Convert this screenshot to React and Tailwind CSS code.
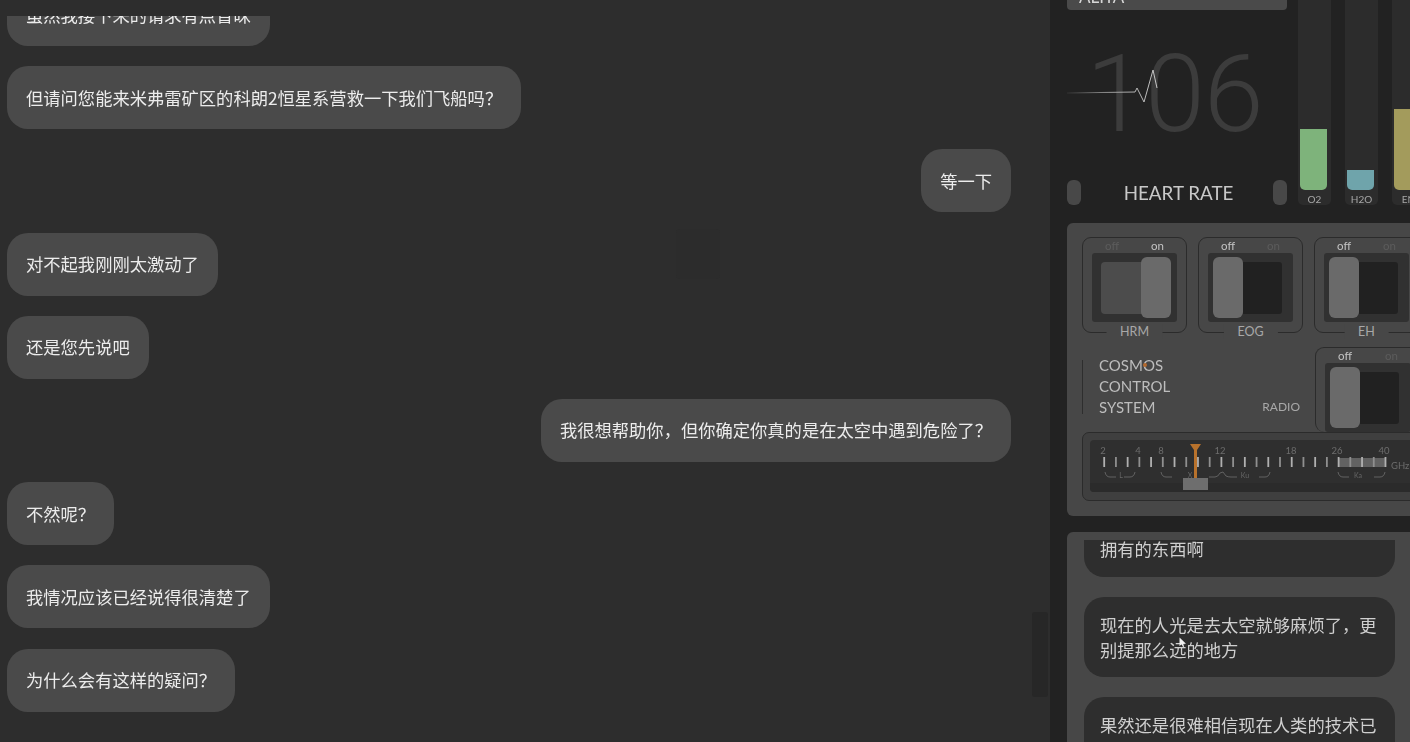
import React from "react";

const cjk = { fontFamily: '"Noto Sans CJK SC", "Noto Sans", sans-serif' };
const lato = { fontFamily: 'Lato, "Open Sans", sans-serif' };
const roboto = { fontFamily: 'Roboto, "Open Sans", sans-serif' };

const chats = [
  { t: "虽然我接下来的请求有点冒昧" },
  { t: "但请问您能来米弗雷矿区的科朗2恒星系营救一下我们飞船吗？" },
  { t: "等一下", me: true },
  { t: "对不起我刚刚太激动了" },
  { t: "还是您先说吧" },
  { t: "我很想帮助你，但你确定你真的是在太空中遇到危险了？", me: true },
  { t: "不然呢？" },
  { t: "我情况应该已经说得很清楚了" },
  { t: "为什么会有这样的疑问？" },
];

function Bubble({ t, me }) {
  return (
    <div className={me ? "flex justify-end pr-[39px]" : "flex justify-start pl-[7px]"}>
      <div className="h-[63px] shrink-0 flex items-center rounded-[21px] bg-[#4a4a4a] px-[19px] text-[17.3px] text-[#ececec] whitespace-nowrap">
        {t}
      </div>
    </div>
  );
}

function Switch({ label, on, radio }) {
  return (
    <div
      className={
        radio
          ? "relative h-[85px] w-[105px] shrink-0 rounded-l-[9px] border-l border-t border-[#2b2b2b]"
          : "relative h-[96px] w-[105px] shrink-0 rounded-[9px] border border-[#2b2b2b]"
      }
    >
      <div className="flex h-[15px] items-center justify-between px-[22px] text-[11.5px] leading-none" style={lato}>
        <span className={on ? "text-[#5c5c5c]" : "text-[#c4c4c4]"}>off</span>
        <span className={on ? "text-[#c4c4c4]" : "text-[#5c5c5c]"}>on</span>
      </div>
      <div className="mx-[9px] flex h-[69px] items-center rounded-[3px] bg-[#313131] px-[5px]">
        <div className="relative h-[52px] w-[76px] flex items-center">
          {on ? (
            <>
              <div className="ml-[4px] h-[52px] w-[62px] rounded-l-[4px] bg-[#4c4c4c]" />
              <div className="absolute right-[1px] top-[-5px] h-[61px] w-[30px] rounded-[6px] bg-[#6a6a6a]" />
            </>
          ) : (
            <>
              <div className="absolute left-0 top-[-5px] h-[61px] w-[30px] rounded-[6px] bg-[#6a6a6a]" />
              <div className="ml-[30px] h-[52px] w-[39px] rounded-r-[3px] bg-[#212121]" />
            </>
          )}
        </div>
      </div>
      {label && (
        <div
          className="absolute bottom-[-7px] left-1/2 -translate-x-1/2 bg-[#474747] px-[14px] text-[12.5px] leading-[15px] text-[#a8a8a8]"
          style={lato}
        >
          {label}
        </div>
      )}
    </div>
  );
}

function Bar({ label, h, color }) {
  return (
    <div className="flex h-[205px] w-[33px] shrink-0 flex-col justify-end rounded-b-[5px] bg-[#2c2c2c]">
      <div className="mx-[2px] mr-[4px] rounded-b-[5px]" style={{ height: h, background: color }} />
      <div className="mt-[3px] h-[12px] text-center text-[10px] leading-[12px] text-[#a6a6a6]" style={lato}>
        {label}
      </div>
    </div>
  );
}

function Tuner() {
  const ticks = Array.from({ length: 25 }, (_, i) => 13.3 + i * 11.72);
  const labels = [
    ["2", 13],
    ["4", 48],
    ["8", 71],
    ["12", 130],
    ["18", 201],
    ["26", 247],
    ["40", 294],
  ];
  const brackets = [
    "M15 32 q1 5 5 5 h6",
    "M34 37 h6 q4 0 5 -5",
    "M71 32 q1 5 5 5 h6",
    "M119 37 h6 q3 0 5 -4 l3 -1 l3 4 q2 1 5 1 h6",
    "M169 37 h6 q4 0 5 -5",
    "M248 32 q1 5 5 5 h6",
    "M284 37 h6 q4 0 5 -5",
  ];
  return (
    <div className="relative mt-0 h-[69px] w-[340px] shrink-0 rounded-[7px] border border-[#2b2b2b] bg-[#3f3f3f] p-[7px] pr-0">
      <div className="h-[52px] w-full overflow-hidden rounded-[4px] bg-[#2f2f2f]">
        <svg width="332" height="52" viewBox="0 0 332 52" style={lato}>
          <rect x="0" y="43" width="332" height="9" fill="#2b2b2b" />
          <rect x="248" y="18" width="47" height="9" fill="#626262" />
          {ticks.map((x, i) => (
            <rect key={i} x={x} y="17" width="1.8" height="10" fill={i % 2 ? "#8f8f8f" : "#b0b0b0"} />
          ))}
          {labels.map(([t, x]) => (
            <text key={t} x={x} y="14" fontSize="9.5" textAnchor="middle" fill="#6c6c6c">
              {t}
            </text>
          ))}
          <text x="301" y="29" fontSize="9.5" fill="#6c6c6c">GHz</text>
          {brackets.map((d, i) => (
            <path key={i} d={d} fill="none" stroke="#6e6e6e" strokeWidth="0.8" />
          ))}
          <text x="31" y="38" fontSize="7" textAnchor="middle" fill="#666">L</text>
          <text x="100" y="38" fontSize="7" textAnchor="middle" fill="#666">X</text>
          <text x="155" y="38" fontSize="7" textAnchor="middle" fill="#666">Ku</text>
          <text x="268" y="38" fontSize="7" textAnchor="middle" fill="#666">Ka</text>
          <rect x="93" y="38" width="25" height="12" fill="#6e6e6e" />
          <path d="M100 4 H111 L107 10 V38 H104 V10 Z" fill="#b8722c" />
        </svg>
      </div>
    </div>
  );
}

export default function App() {
  return (
    <div className="h-[742px] w-[1410px] overflow-hidden bg-[#2d2d2d]">
      <div className="flex h-[742px] w-[1410px] blur-[0.4px]" style={cjk}>
        {/* chat column */}
        <div className="relative h-full w-[1050px] shrink-0 pt-[16px]">
          <div className="h-[726px] overflow-hidden">
            <div className="mt-[-33px] flex flex-col gap-[20.2px]">
              {chats.map((c, i) => (
                <Bubble key={i} t={c.t} me={c.me} />
              ))}
            </div>
          </div>
          <div className="absolute left-[676px] top-[229px] h-[50px] w-[44px] rounded-[4px] bg-[#2c2c2c]" />
          <div className="absolute right-[2px] top-[612px] h-[85px] w-[16px] rounded-[3px] bg-[#272727]" />
        </div>

        {/* right column */}
        <div className="relative flex h-full w-[360px] shrink-0 flex-col overflow-hidden bg-[#222222]">
          <div className="flex h-[205px] shrink-0 pl-[17px]">
            <div className="flex w-[220px] shrink-0 flex-col" style={lato}>
              <div className="flex h-[10px] items-end overflow-hidden rounded-b-[4px] bg-[#4a4a4a] pb-[5px] pl-[12px] text-[17px] leading-none text-[#d8d8d8]">
                ALITA
              </div>
              <div className="relative flex h-[170px] items-start pl-[19px] pt-[30px]">
                <span className="text-[108px] font-light leading-[108px] tracking-[-1px] text-[#3c3c3c]" style={roboto}>
                  106
                </span>
                <svg className="absolute left-0 top-[55px]" width="96" height="50" viewBox="0 0 96 50">
                  <defs>
                    <linearGradient id="ecgfade" x1="0" x2="1" y1="0" y2="0">
                      <stop offset="0" stopColor="#b8b8b8" stopOpacity="0.1" />
                      <stop offset="0.5" stopColor="#b8b8b8" stopOpacity="0.8" />
                      <stop offset="1" stopColor="#c8c8c8" />
                    </linearGradient>
                  </defs>
                  <path d="M0 28 L68 27 L70 23 L77 37 L86 5 L90 23" fill="none" stroke="url(#ecgfade)" strokeWidth="1" />
                </svg>
              </div>
              <div className="flex h-[25px] items-center justify-between">
                <div className="h-[25px] w-[14px] rounded-[6px] bg-[#484848]" />
                <span className="ml-[3px] mt-[1px] text-[18.8px] text-[#c8c8c8]">HEART RATE</span>
                <div className="h-[25px] w-[14px] rounded-[6px] bg-[#484848]" />
              </div>
            </div>
            <div className="ml-[11px] flex gap-[14px]">
              <Bar label="O2" h={61} color="#7eb37b" />
              <Bar label="H2O" h={20} color="#6fa4ab" />
              <Bar label="EN" h={81} color="#a39b5c" />
            </div>
          </div>

          {/* control panel */}
          <div className="ml-[17px] mt-[18px] h-[293px] w-[380px] shrink-0 rounded-[6px] bg-[#474747] px-[15px] pt-[14px]">
            <div className="flex gap-[11px]">
              <Switch label="HRM" on />
              <Switch label="EOG" />
              <Switch label="EH" />
            </div>
            <div className="mt-[14px] flex h-[85px]">
              <div className="flex w-[233px] shrink-0 flex-col">
                <div className="flex flex-1">
                  <div className="mt-[13px] h-[54px] w-px bg-[#2e2e2e]" />
                  <div className="relative ml-[16px] mt-[8px] text-[15px] leading-[21px] text-[#bdbdbd]" style={lato}>
                    <div>COSMOS</div>
                    <div>CONTROL</div>
                    <div>SYSTEM</div>
                    <div className="absolute left-[44px] top-[8px] h-[4px] w-[4px] rounded-full bg-[#b3682c]" />
                  </div>
                  <div className="ml-auto mr-[15px] mt-[52px] text-[12px] leading-[15px] text-[#a8a8a8]" style={lato}>
                    RADIO
                  </div>
                </div>
              </div>
              <Switch on={false} radio />
            </div>
            <Tuner />
          </div>

          {/* log panel */}
          <div className="ml-[17px] mt-[16px] min-h-0 flex-1 rounded-tl-[6px] bg-[#474747] pl-[17px] pr-[15px] pt-[8px]">
            <div className="h-full overflow-hidden">
              <div className="mt-[-30px] flex flex-col gap-[20px] text-[17.3px] leading-[25px] text-[#cfcfcf]">
                <div className="h-[67px] shrink-0 rounded-[20px] bg-[#2e2e2e] px-[16px] pt-[26px]">拥有的东西啊</div>
                <div className="h-[80px] shrink-0 rounded-[20px] bg-[#2e2e2e] px-[16px] pt-[15px]">
                  现在的人光是去太空就够麻烦了，更别提那么远的地方
                </div>
                <div className="h-[80px] shrink-0 rounded-[20px] bg-[#2e2e2e] px-[16px] pt-[15px]">
                  果然还是很难相信现在人类的技术已经能去那么远的地方
                </div>
              </div>
            </div>
          </div>

          {/* mouse pointer */}
          <svg className="absolute left-[129px] top-[637px]" width="8" height="11" viewBox="0 0 8 11">
            <path d="M0.5 0.5 V9 L2.6 7.2 L4 10 L5.2 9.4 L4 6.8 H7 Z" fill="#f0f0f0" />
          </svg>
        </div>
      </div>
    </div>
  );
}
